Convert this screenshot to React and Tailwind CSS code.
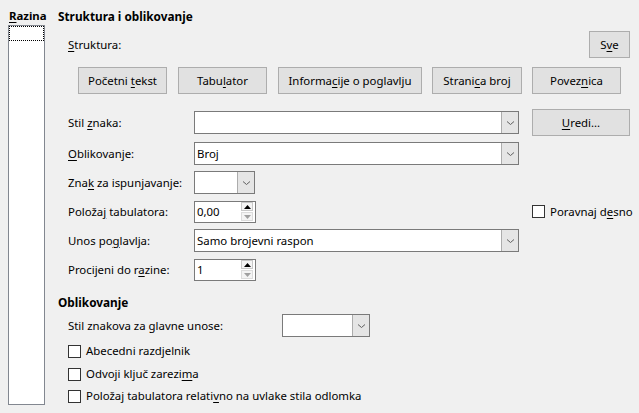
import React from "react";

const U = ({ children }) => <span className="underline underline-offset-[2px] decoration-1">{children}</span>;

const Chevron = () => (
  <svg width="9" height="6" viewBox="0 0 9 6" className="text-[#606060]">
    <path d="M1 1.5 L4.5 4.5 L8 1.5" fill="none" stroke="currentColor" strokeWidth="1" />
  </svg>
);

// combobox with dropdown arrow on the right
const Combo = ({ width, value }) => (
  <div className={`flex shrink-0 h-[23px] bg-white border border-[#7a7a7a] ${width}`}>
    <div className="flex-1 flex items-center pl-[2px] leading-none">{value}</div>
    <div className="w-[17px] bg-[#e5e5e5] border-l border-[#acacac] flex items-center justify-center">
      <Chevron />
    </div>
  </div>
);

// spin field with up/down arrows
const Spin = ({ value }) => (
  <div className="flex shrink-0 h-[22px] w-[62px] bg-white border border-[#7a7a7a]">
    <div className="flex-1 flex items-center pl-[2px] leading-none">{value}</div>
    <div className="w-[15px] flex flex-col items-center justify-center gap-[1px] pr-[1px]">
      <div className="w-[12px] h-[9px] border border-[#c8c8c8] bg-[#f4f4f4] flex items-center justify-center">
        <svg width="7" height="4" viewBox="0 0 7 4"><path d="M0 4 L3.5 0 L7 4 Z" fill="#000" /></svg>
      </div>
      <div className="w-[12px] h-[9px] border border-[#dcdcdc] bg-[#f4f4f4] flex items-center justify-center">
        <svg width="7" height="4" viewBox="0 0 7 4"><path d="M0 0 L3.5 4 L7 0 Z" fill="#a0a0a0" /></svg>
      </div>
    </div>
  </div>
);

const Btn = ({ children, className = "" }) => (
  <div className={`h-[27px] shrink-0 flex items-center justify-center bg-[#e1e1e1] border border-[#adadad] ${className}`}>
    <span className="whitespace-nowrap">{children}</span>
  </div>
);

const Check = ({ children, className = "" }) => (
  <div className={`flex items-center whitespace-nowrap ${className}`}>
    <div className="w-[13px] h-[13px] border border-[#333] bg-white mr-[5px] shrink-0" />
    <span>{children}</span>
  </div>
);

const Row = ({ label, children, className = "" }) => (
  <div className={`flex items-center h-[23px] ${className}`}>
    <div className="w-[136px] shrink-0 pl-[10px] whitespace-nowrap">{label}</div>
    {children}
  </div>
);

export default function App() {
  return (
    <div
      className="w-[639px] h-[413px] bg-[#f0f0f0] flex text-[11.4px] text-black leading-[16px] overflow-hidden"
      style={{ fontFamily: '"Segoe UI", "Noto Sans", sans-serif' }}
    >
      {/* Razina */}
      <div className="w-[58px] shrink-0 pl-[8px] flex flex-col">
        <div className="font-bold mt-[8px] pl-[1px] h-[16px]"><U>R</U>azina</div>
        <div className="w-[37px] h-[380px] mt-[1px] bg-white border border-[#828790] p-0">
          <div className="h-[15px] border border-dotted border-black" />
        </div>
      </div>

      <div className="flex-1 min-w-0 flex flex-col pr-[9px]">
        <div className="font-bold mt-[8px] h-[16px] text-[11.8px]">Struktura i oblikovanje</div>

        <div className="flex items-center justify-between h-[27px] mt-[7px]">
          <div className="pl-[10px]"><U>S</U>truktura:</div>
          <Btn className="w-[41px]">S<U>v</U>e</Btn>
        </div>

        <div className="flex h-[27px] mt-[9px] pl-[20px]">
          <Btn className="w-[89px]">Početni <U>t</U>ekst</Btn>
          <Btn className="w-[89px] ml-[11px]">Tabu<U>l</U>ator</Btn>
          <Btn className="w-[144px] ml-[11px]">Informa<U>c</U>ije o poglavlju</Btn>
          <Btn className="w-[90px] ml-[10px]">Strani<U>c</U>a broj</Btn>
          <Btn className="w-[89px] ml-[10px]">Povez<U>n</U>ica</Btn>
        </div>

        <div className="flex items-center h-[27px] mt-[15px]">
          <div className="w-[136px] shrink-0 pl-[10px]">Stil <U>z</U>naka:</div>
          <Combo width="w-[325px]" />
          <Btn className="w-[98px] ml-[13px]"><U>U</U>redi...</Btn>
        </div>

        <Row label={<><U>O</U>blikovanje:</>} className="mt-[6px]">
          <Combo width="w-[325px]" value="Broj" />
        </Row>

        <Row label={<>Zna<U>k</U> za ispunjavanje:</>} className="mt-[6px]">
          <Combo width="w-[61px]" />
        </Row>

        <Row label={<>Položa<U>j</U> tabulatora:</>} className="mt-[6px]">
          <Spin value="0,00" />
          <Check className="ml-[276px]">Poravnaj d<U>e</U>sno</Check>
        </Row>

        <Row label={<>Unos po<U>g</U>lavlja:</>} className="mt-[6px]">
          <Combo width="w-[325px]" value="Samo brojevni raspon" />
        </Row>

        <Row label={<>Procijeni do r<U>a</U>zine:</>} className="mt-[6px]">
          <Spin value="1" />
        </Row>

        <div className="font-bold mt-[13px] h-[16px] text-[11.8px]">Oblikovanje</div>

        <div className="flex items-center h-[23px] mt-[4px]">
          <div className="w-[224px] shrink-0 pl-[10px] whitespace-nowrap">Stil znakova za glavne unose:</div>
          <Combo width="w-[88px]" />
        </div>

        <Check className="h-[20px] mt-[4px] pl-[10px]">Abecedni razdjelnik</Check>
        <Check className="h-[20px] mt-[3px] pl-[10px]">Odvoji ključ zarezi<U>m</U>a</Check>
        <Check className="h-[20px] mt-[2px] pl-[10px]">Položaj tabulatora relati<U>v</U>no na uvlake stila odlomka</Check>
      </div>
    </div>
  );
}
